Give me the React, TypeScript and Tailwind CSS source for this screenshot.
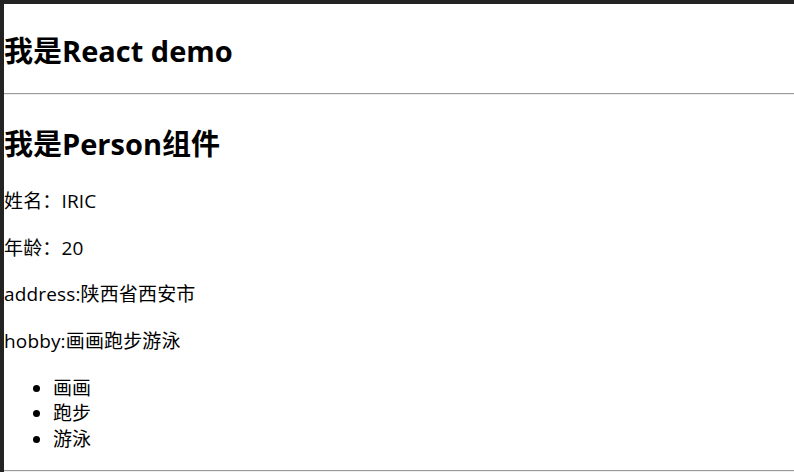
export default function App() {
  const hobbies = ["画画", "跑步", "游泳"];

  return (
    <div className="h-[472px] w-[794px] overflow-hidden bg-[#232323] pl-[4px] pt-[4px]">
      <div
        className="h-full bg-white text-black"
        style={{ fontFamily: '"Open Sans", "Noto Sans CJK SC", sans-serif' }}
      >
        <h2 className="pt-[27.5px] pb-[23.5px] text-[29px] leading-[38px] font-bold">
          我是React demo
        </h2>
        <hr className="border-t border-b border-t-[#9a9a9a] border-b-[#eeeeee]" />

        <div>
          <h2 className="pt-[29.5px] text-[29px] leading-[38px] font-bold">
            我是Person组件
          </h2>
          <p className="mt-[26.5px] text-[19px] leading-[25.5px] tracking-[0.15px]">姓名：IRIC</p>
          <p className="mt-[21px] text-[19px] leading-[25.5px] tracking-[0.15px]">年龄：20</p>
          <p className="mt-[21px] text-[19px] leading-[25.5px] tracking-[0.15px]">address:陕西省西安市</p>
          <p className="mt-[21px] text-[19px] leading-[25.5px] tracking-[0.15px]">hobby:画画跑步游泳</p>
          <ul className="mt-[21.5px] list-disc pl-[49px] text-[19px] leading-[25.5px]">
            {hobbies.map((h) => (
              <li key={h}>{h}</li>
            ))}
          </ul>
        </div>

        <hr className="mt-[17.5px] border-t border-b border-t-[#9a9a9a] border-b-[#eeeeee]" />
      </div>
    </div>
  );
}
